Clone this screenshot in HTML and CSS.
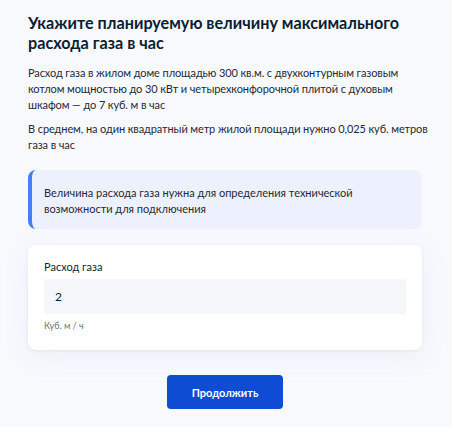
FILE: index.html
```html
<!DOCTYPE html>
<html lang="ru">
<head>
    <meta charset="UTF-8">
    <title>Расход газа</title>
    <link rel="stylesheet" href="styles.css">
</head>
<body>
    <div class="page">
        <h1 class="title">Укажите планируемую величину максимального расхода газа в час</h1>
        <p class="text">Расход газа в жилом доме площадью 300 кв.м. с двухконтурным газовым котлом мощностью до 30 кВт и четырехконфорочной плитой с духовым шкафом — до 7 куб. м в час</p>
        <p class="text text-second">В среднем, на один квадратный метр жилой площади нужно 0,025 куб. метров газа в час</p>

        <div class="info">Величина расхода газа нужна для определения технической возможности для подключения</div>

        <div class="card">
            <label class="label" for="gas">Расход газа</label>
            <input class="input" id="gas" type="text" value="2">
            <div class="hint">Куб. м / ч</div>
        </div>

        <div class="actions">
            <button class="btn">Продолжить</button>
        </div>
    </div>
</body>
</html>
```

FILE: styles.css
```css
body {
    margin: 0;
    background-color: #f8f9fd;
    color: #0b1f33;
    font-family: Lato, "Noto Sans", sans-serif;
}

.page {
    padding: 13px 30px 17px 28px;
}

.title {
    margin: 0;
    font-size: 16.2px;
    line-height: 20px;
    font-weight: 700;
}

.text {
    margin: 12px -14px 0 0;
    font-size: 11px;
    line-height: 16px;
    letter-spacing: -0.1px;
    color: #1d2a38;
}

.text-second {
    margin-top: 8px;
}

.info {
    margin-top: 17px;
    padding: 15px 16px 12px 12px;
    background-color: #edf1fd;
    border-left: 4px solid #4a7cf7;
    border-radius: 8px;
    font-size: 11px;
    line-height: 16px;
    color: #1d2a38;
}

.card {
    margin-top: 16px;
    padding: 14px 16px 17px;
    background-color: #fff;
    border-radius: 8px;
    box-shadow: 0 1px 3px rgba(60, 90, 160, 0.08), 0 6px 28px rgba(80, 110, 200, 0.08);
}

.label {
    display: block;
    font-size: 11px;
    line-height: 16px;
    margin-bottom: 4px;
}

.input {
    display: block;
    box-sizing: border-box;
    width: 100%;
    height: 35px;
    padding: 0 11px;
    border: none;
    border-radius: 4px;
    background-color: #f5f6fa;
    font-family: inherit;
    font-size: 12px;
    color: #0b1f33;
    outline: none;
}

.hint {
    margin-top: 5px;
    font-size: 9px;
    line-height: 14px;
    color: #66727f;
}

.actions {
    display: flex;
    justify-content: center;
    margin-top: 25px;
}

.btn {
    width: 116px;
    height: 34px;
    border: none;
    border-radius: 4px;
    background-color: #0d4cd3;
    color: #fff;
    font-family: inherit;
    font-size: 11px;
    font-weight: 700;
    cursor: pointer;
}
```
